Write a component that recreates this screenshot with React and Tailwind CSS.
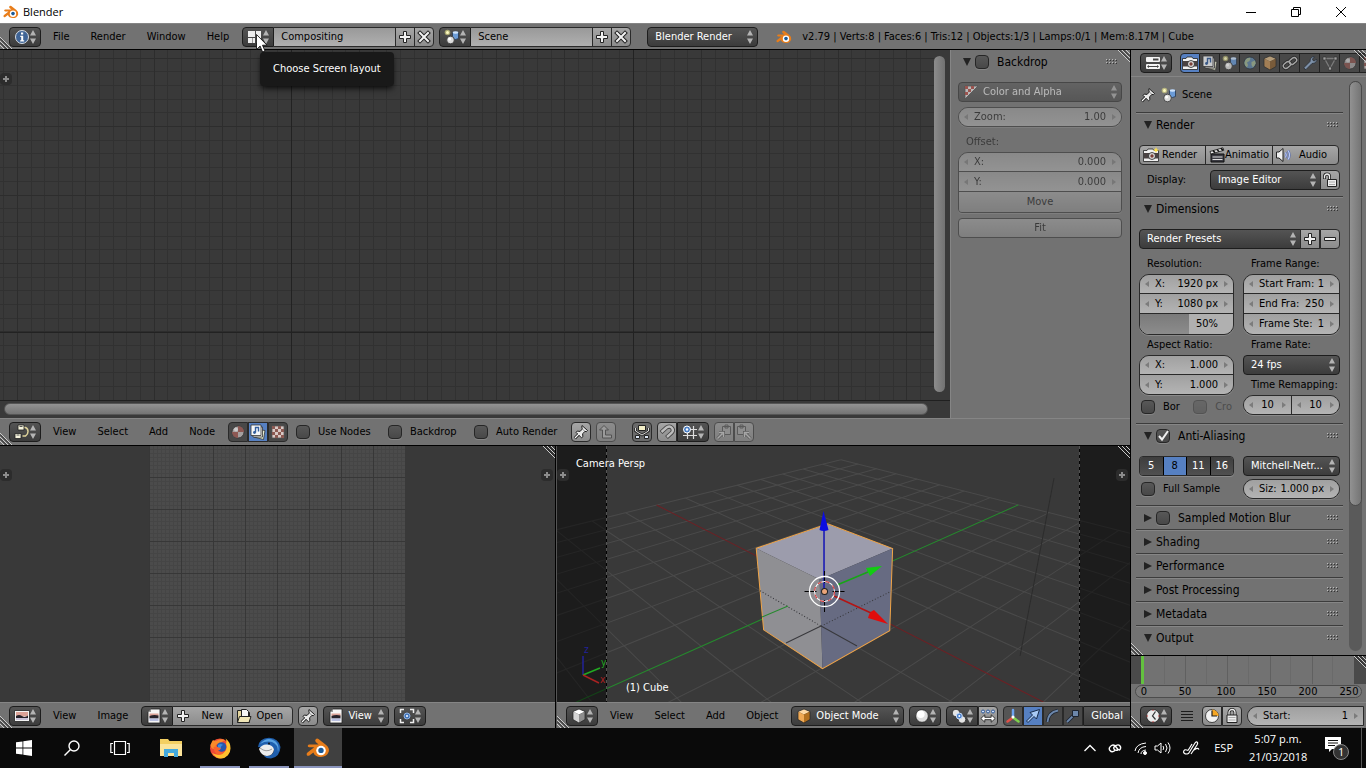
import React, { useState } from 'react'
import clsx from 'clsx'

/* ---------- icons ---------- */

function Ico({ children, className = 'size-4' }) {
  return <svg viewBox="0 0 16 16" className={clsx('shrink-0', className)} fill="none" aria-hidden="true">{children}</svg>
}

const BlenderLogo = ({ className }) => (
  <Ico className={className}>
    <path d="M6.6 2 Q7.4 1.300 8.300 2 L13.400 6 Q15.800 8 15.200 10.400 Q14 14 9.900 14 Q5.900 13.900 4.900 11 L2.300 13 Q1 13.600.5 12.600 Q.2 11.700 1 11 L5.500 7.500 H2.200 Q.9 7.300 1.200 6.300 Q1.400 5.600 2.300 5.600 H8.400 L6.500 4 Q5.700 3 6.600 2Z" fill="#e87d1a" />
    <circle cx="10" cy="9.700" r="3.200" fill="#fff" />
    <circle cx="10" cy="9.600" r="1.800" fill="#1c5a96" />
  </Ico>
)
const InfoIcon = () => (
  <Ico>
    <circle cx="8" cy="8" r="6.500" fill="#3f6496" stroke="#d7dde5" />
    <path d="M7 3.500h2.200v2H7zM6.300 6.800h2.900v4.400h1v1.200H6.200v-1.200h1V8h-.9z" fill="#fff" />
  </Ico>
)
const LayoutIcon = () => (
  <Ico><path d="M1 2h7v6H1zM1 9h4.500v5H1zM9 2h5v12H9zM6 9h2v5H6z" fill="#eee" /></Ico>
)
const PlusIcon = () => (
  <Ico><path d="M6.500 2.500h3v4h4v3h-4v4h-3v-4h-4v-3h4z" fill="#f2f2f2" stroke="#222" /></Ico>
)
const MinusIcon = () => <Ico><path d="M2.500 6.500h11v3h-11z" fill="#f2f2f2" stroke="#222" /></Ico>
const CrossIcon = () => (
  <Ico>
    <path d="M4 4l8 8M12 4l-8 8" stroke="#222" strokeWidth="4" strokeLinecap="square" />
    <path d="M4 4l8 8M12 4l-8 8" stroke="#f2f2f2" strokeWidth="2" strokeLinecap="square" />
  </Ico>
)
const SceneIcon = () => (
  <Ico>
    <circle cx="3.500" cy="3.500" r="2.800" fill="#e6e38a" opacity=".6" />
    <circle cx="3.500" cy="3.500" r="1.500" fill="#fdfbc0" />
    <path d="M8.500 3.500q3-2 6 0v6q-3 2-6 0z" fill="#6b9bd6" stroke="#26364e" strokeWidth=".8" />
    <ellipse cx="11.500" cy="3.500" rx="2.800" ry="1.200" fill="#cfe3fa" />
    <circle cx="6.500" cy="11" r="3.800" fill="#ddd" stroke="#333" strokeWidth=".8" />
    <circle cx="5.600" cy="10" r="1.500" fill="#fff" />
  </Ico>
)
const NodeIcon = () => (
  <Ico>
    <path d="M9.500 3.500h2q2.500 1 2.500 4t-2.500 4.500h-3" stroke="#ddd29a" strokeWidth="1.500" />
    <path d="M4 1h6v5H4zM1 9.500h6v5H1z" fill="#f6f4dd" stroke="#222" strokeWidth=".8" />
    <path d="M5.500 2.500h3M2.500 11h3" stroke="#555" />
  </Ico>
)
const MaterialIcon = () => (
  <Ico>
    <circle cx="8" cy="8" r="6" fill="#a5a0a0" stroke="#333" strokeWidth=".8" />
    <path d="M8 2a6 6 0 0 1 6 6H8zM8 8v6a6 6 0 0 1-6-6z" fill="#8d5853" />
    <circle cx="6" cy="5.500" r="2" fill="#ddd" opacity=".7" />
  </Ico>
)
const LayersIcon = () => (
  <Ico>
    <path d="M5 5l10 1.500-1.500 9L4 13z" fill="#e8ecd2" stroke="#333" strokeWidth=".8" />
    <path d="M3 3h9.500v10H3z" fill="#eee" stroke="#333" strokeWidth=".8" />
    <path d="M1 1h10v10.500H1z" fill="#f6f8fb" stroke="#333" strokeWidth=".8" />
    <path d="M5.500 8.500V3.500h3v4" stroke="#345e9d" strokeWidth="1.400" />
    <circle cx="4.500" cy="8.500" r="1.400" fill="#345e9d" />
  </Ico>
)
const CheckerIcon = () => (
  <Ico>
    <path d="M2 2h12v12H2z" fill="#d9c9c5" stroke="#555" strokeWidth=".8" />
    <path d="M2 2h3v3H2zM8 2h3v3H8zM5 5h3v3H5zM11 5h3v3h-3zM2 8h3v3H2zM8 8h3v3H8zM5 11h3v3H5zM11 11h3v3h-3z" fill="#8c5a53" />
  </Ico>
)
const AlphaIcon = () => (
  <Ico>
    <path d="M2 2h13L2 15z" fill="#fff" stroke="#333" strokeWidth=".8" />
    <path d="M2 2h3v3H2zM8 2h3v3H8zM5 5h3v3H5zM2 8h3v3H2z" fill="#c2372c" />
  </Ico>
)
const PinIcon = () => (
  <Ico>
    <path d="M5.800 10.200L1.800 14.200" stroke="#1d1d1d" strokeWidth="3" />
    <path d="M9 1.500l5.500 5-1.200 1.200-1.300-.3-2.400 2.300.3 3-1.300 1.200L3 8.300l1.200-1.200 2.900.3L9.300 5 8.800 3z" fill="#e9e9e9" stroke="#1d1d1d" />
    <path d="M5.800 10.200L2 14" stroke="#fff" strokeWidth="1.200" />
    <path d="M9.300 5L12 7.400" stroke="#777" strokeWidth=".8" />
  </Ico>
)
const ParentIcon = () => (
  <Ico><path d="M6 1.500l4.500 4.500h-3v5h6v3h-9V6h-3z" fill="#c4c4c4" stroke="#333" /></Ico>
)
const AutoOffsetIcon = () => (
  <Ico>
    <path d="M4.500 1.500h7v5h-7z" fill="#f3efc8" stroke="#222" />
    <path d="M1.500 4v3l6.500 4 6.500-4V4" stroke="#222" strokeWidth="2.500" />
    <path d="M1.500 4v3l6.500 4 6.500-4V4" stroke="#ddd" />
    <path d="M1.500 11.500h4v3h-4zM10.500 11.500h4v3h-4z" fill="#dbe5f4" stroke="#222" />
  </Ico>
)
const MagnetIcon = () => (
  <Ico>
    <path d="M2 8.500L7.500 3.500q3.500-2 5.500.5t-.5 5L7.500 13.500" stroke="#444" strokeWidth="4.200" />
    <path d="M2.500 8L7.500 3.500q3.500-2 5.500.5t-.5 5L8 13" stroke="#bdbdbd" strokeWidth="2.400" />
  </Ico>
)
const SnapIcon = () => (
  <Ico>
    <path d="M1 5.500h14M1 11.500h14M5.500 2v13M11.500 2v13" stroke="#ddd" strokeWidth="1.200" />
    <circle cx="5" cy="5.500" r="3.500" fill="#4b7fc4" stroke="#fff" />
    <circle cx="5" cy="5.500" r="1.200" fill="#fff" />
  </Ico>
)
const CopyIcon = ({ flip }) => (
  <Ico className={flip ? 'size-4 -scale-x-100' : 'size-4'}>
    <path d="M6.500 2.500h8v8h-8zM9 1h3v3H9z" fill="#aaa" stroke="#444" />
    <path d="M1.500 14.500l5-5M3 8.500h4.500V13" stroke="#444" strokeWidth="3" />
    <path d="M1.500 14.500l5-5M3 8.500h4.500V13" stroke="#ddd" strokeWidth="1.500" />
  </Ico>
)
const PictureIcon = () => (
  <Ico>
    <path d="M.5 2.500h15v11H.5z" fill="#f3f3f3" stroke="#222" strokeWidth=".8" />
    <path d="M2 4h12v4.500H2z" fill="#dba297" />
    <path d="M2 8q3-2 6 0t6-.5v3H2z" fill="#26222a" />
    <path d="M2 10h12v2H2z" fill="#c9c3d8" />
  </Ico>
)
const ImageFileIcon = () => (
  <Ico>
    <path d="M5 1h9v14H2V4z" fill="#f5f5f5" stroke="#222" strokeWidth=".8" />
    <path d="M3.500 5.500h9v3h-9z" fill="#dba297" />
    <path d="M3.500 8q4-1.500 9-.5v3h-9z" fill="#26222a" />
    <path d="M3.500 10.500h9V13h-9z" fill="#b9bfe0" />
    <path d="M2 4h3V1z" fill="#999" />
  </Ico>
)
const FolderIcon = () => (
  <Ico>
    <path d="M1.500 2.500h4v2h8v10h-12z" fill="#e2d49c" stroke="#222" />
    <path d="M5.500 1.500h5l2 2v6h-7z" fill="#f6f6f6" stroke="#222" />
    <path d="M3.500 8.500h11.500l-2 6H1.500z" fill="#f0e6b6" stroke="#222" />
  </Ico>
)
const PivotFrameIcon = () => (
  <Ico>
    <path d="M1.500 5V1.500H5M11 1.500h3.500V5M14.500 11v3.500H11M5 14.500H1.500V11" stroke="#eee" strokeWidth="1.500" />
    <circle cx="8" cy="8" r="3" fill="#4576b9" stroke="#8fb2e2" />
    <circle cx="8" cy="8" r="1" fill="#fff" />
  </Ico>
)
const CubeIcon = ({ colors = ['#fff', '#d5d5d5', '#8e8e8e'] }) => (
  <Ico>
    <path d="M8 1l6 2.500L8 6.500 2 3.500z" fill={colors[0]} />
    <path d="M2 3.500l6 3V15l-6-3.500z" fill={colors[1]} />
    <path d="M14 3.500l-6 3V15l6-3.500z" fill={colors[2]} />
    <path d="M8 1l6 2.500v8L8 15l-6-3.500v-8z" stroke="#222" strokeWidth=".7" />
  </Ico>
)
const orange = ['#ffd9a4', '#f0a954', '#b3701f']
const SolidIcon = () => (
  <Ico>
    <circle cx="8" cy="8" r="6.300" fill="#dedede" stroke="#222" strokeWidth=".8" />
    <circle cx="6.800" cy="6.300" r="3.800" fill="#fff" />
  </Ico>
)
const MedianIcon = () => (
  <Ico>
    <circle cx="5" cy="5" r="3.800" fill="#e4e4e4" stroke="#222" strokeWidth=".8" />
    <circle cx="11" cy="11.500" r="3.800" fill="#e4e4e4" stroke="#222" strokeWidth=".8" />
    <circle cx="8.300" cy="8" r="3" fill="#4b80cc" stroke="#cfe0fa" />
    <circle cx="8.300" cy="8" r="1" fill="#fff" />
  </Ico>
)
const CentersIcon = () => (
  <Ico>
    <g stroke="#2e5795" fill="#cfe0fa"><circle cx="3" cy="3.500" r="1.500" /><circle cx="8" cy="3.500" r="1.500" /><circle cx="13" cy="3.500" r="1.500" /></g>
    <path d="M.8 10.500l4-3.700v2.500h6.400V6.800l4 3.700-4 3.700v-2.500H4.800v2.500z" fill="#fff" stroke="#222" strokeWidth=".9" />
  </Ico>
)
const AxesIcon = () => (
  <Ico>
    <path d="M8 9V2" stroke="#6da4f0" strokeWidth="2.500" strokeLinecap="round" />
    <path d="M8 9.500l-5.500 4" stroke="#e05048" strokeWidth="2.500" strokeLinecap="round" />
    <path d="M8 9.500l5.500 4" stroke="#7ed04c" strokeWidth="2.500" strokeLinecap="round" />
    <circle cx="8" cy="9" r="1.500" fill="#fff" />
  </Ico>
)
const ArrowIcon = () => (
  <Ico><path d="M1.500 13L7.500 7 5 4.500 14.500 1.500 11.500 11 9 8.500 3 14.500z" fill="#a8c9f5" stroke="#15294a" /></Ico>
)
const ArcIcon = () => (
  <Ico>
    <path d="M2.500 14Q3 4.500 13 2.500" stroke="#1d2430" strokeWidth="3.500" />
    <path d="M2.500 14Q3 4.500 13 2.500" stroke="#6c87ab" strokeWidth="1.800" />
  </Ico>
)
const ScaleIcon = () => (
  <Ico>
    <path d="M2 14l7-7" stroke="#1d2430" strokeWidth="3.500" /><path d="M2 14l7-7" stroke="#6c87ab" strokeWidth="1.800" />
    <path d="M7.500 2.500h6v6h-6z" fill="#6c87ab" stroke="#1d2430" />
  </Ico>
)
const ClockIcon = () => (
  <Ico>
    <circle cx="8" cy="8" r="6.500" fill="#ececec" stroke="#222" strokeWidth=".8" />
    <path d="M10.500 3.500L7.500 8l3 3.500" stroke="#333" strokeWidth="1.200" />
    <path d="M8 1.500v1.500M8 13v1.500M1.500 8H3M13 8h1.500" stroke="#b33" />
  </Ico>
)
const RangeClockIcon = () => (
  <Ico>
    <circle cx="8" cy="8" r="6.500" fill="#f1f1f1" stroke="#222" strokeWidth=".8" />
    <path d="M8 8V1.500A6.500 6.500 0 0 1 14.500 8z" fill="#f5a623" />
    <path d="M8 2.500V8h5" stroke="#222" strokeWidth="1.200" />
  </Ico>
)
const LockIcon = () => (
  <Ico>
    <path d="M5 7V4.500a3 3 0 0 1 6 0V7" stroke="#222" strokeWidth="3" /><path d="M5 7V4.500a3 3 0 0 1 6 0V7" stroke="#eee" strokeWidth="1.300" />
    <path d="M3 7h10v7.500H3z" fill="#eee" stroke="#222" /><path d="M4.500 9.500h7M4.500 12h7" stroke="#aaa" />
  </Ico>
)
const UnlockIcon = () => (
  <Ico>
    <path d="M2.500 7V4.500a2.500 2.500 0 0 1 5 0V8" stroke="#222" strokeWidth="3" /><path d="M2.500 6.500v-2a2.500 2.500 0 0 1 5 0V8" stroke="#eee" strokeWidth="1.300" />
    <path d="M5.500 7.500h9v7h-9z" fill="#eee" stroke="#222" /><path d="M7 10h6M7 12.500h6" stroke="#aaa" />
  </Ico>
)
const PropsIcon = () => (
  <Ico>
    <rect x="1" y="2" width="14" height="5" rx="1" fill="#f4f4f4" /><path d="M8 3.500h5.500v2H8z" fill="#444" />
    <rect x="1" y="9" width="14" height="5" rx="1" fill="#f4f4f4" /><path d="M4 11.500h8" stroke="#444" /><path d="M4 10l-2 1.500L4 13zM12 10l2 1.500-2 1.500z" fill="#444" />
  </Ico>
)
const CameraIcon = ({ star }) => (
  <Ico>
    <path d="M.5 3.500h3.500l1-1.500h5l1 1.500h4.500v11H.5z" fill="#f1f1f1" stroke="#222" strokeWidth=".8" />
    <path d="M1 6h14v5.500H1z" fill="#4a4242" />
    <circle cx="9" cy="9" r="3.500" fill="#ddd" stroke="#222" strokeWidth=".8" />
    <circle cx="9" cy="9" r="1.700" fill="#7a4038" />
    {star && <path d="M13 0l.9 2.200L16 3l-2.100.9L13 6l-.9-2.100L10 3l2.100-.8z" fill="#ffe14a" />}
  </Ico>
)
const WorldIcon = () => (
  <Ico>
    <circle cx="8" cy="8" r="6" fill="#6286a8" stroke="#26303a" strokeWidth=".8" />
    <path d="M4 4q3-2 4.500-1L7.500 6 5 7.500 6 10l-1 2.500Q2 10 2.500 7zM9.500 7l3.500-1.500.8 3L11 12.500 9.500 10z" fill="#9fb493" />
  </Ico>
)
const LinkIcon = () => (
  <Ico>
    <g stroke="#222" strokeWidth="3.200"><rect x="1" y="7.500" width="8" height="5" rx="2.500" transform="rotate(-40 5 10)" /><rect x="7" y="3.500" width="8" height="5" rx="2.500" transform="rotate(-40 11 6)" /></g>
    <g stroke="#c4c4c4" strokeWidth="1.400"><rect x="1" y="7.500" width="8" height="5" rx="2.500" transform="rotate(-40 5 10)" /><rect x="7" y="3.500" width="8" height="5" rx="2.500" transform="rotate(-40 11 6)" /></g>
  </Ico>
)
const WrenchIcon = () => (
  <Ico><path d="M2 12.500l6-6Q7.500 3 11 1.500l1.500.3-2 2.200.5 1.500 1.500.5 2-2 .3 1.500Q13.500 9 10 8.500l-6 6Q2.500 15 2 12.500z" fill="#8fa9c8" stroke="#1d2430" strokeWidth=".8" /></Ico>
)
const MeshIcon = () => (
  <Ico>
    <path d="M2.500 3.500h11L8 13.500z" stroke="#8d8d8d" strokeWidth="1.300" />
    <path d="M1 2h3v3H1zM12 2h3v3h-3zM6.500 12h3v3h-3z" fill="#bdbdbd" stroke="#222" strokeWidth=".6" />
  </Ico>
)
const ClapperIcon = () => (
  <Ico>
    <path d="M2 7h13v8H2z" fill="#3b3b42" stroke="#111" />
    <path d="M1 4.500L14 .8l.8 2.500L1.800 7z" fill="#eee" stroke="#111" strokeWidth=".8" />
    <path d="M4 3.600l2 2M8 2.500l2 2M12 1.400l2 2" stroke="#111" strokeWidth="1.500" />
    <path d="M3.500 10h10M3.500 12.500h10" stroke="#ddd" />
  </Ico>
)
const SpeakerIcon = () => (
  <Ico>
    <path d="M.5 5h2.500l4-3.500v13L3 11H.5z" fill="#eee" stroke="#222" />
    <path d="M9.500 5.500q1.500 2.500 0 5M12 3.500q3 4.500 0 9" stroke="#5c6fb0" strokeWidth="2.400" />
    <path d="M9.500 5.500q1.500 2.500 0 5M12 3.500q3 4.500 0 9" stroke="#bccbf2" strokeWidth="1.200" />
  </Ico>
)

/* ---------- small parts ---------- */

const UpDown = () => (
  <svg viewBox="0 0 6 14" className="h-3.5 w-1.5 shrink-0" aria-hidden="true"><path d="M3 0l3 5.500H0zM3 14l3-5.500H0z" fill="#b4b4b4" /></svg>
)
const Tri = ({ left }) => (
  <svg viewBox="0 0 4 6" className="h-1.5 w-1 shrink-0" aria-hidden="true"><path d={left ? 'M4 0v6L0 3z' : 'M0 0v6l4-3z'} fill="#7c7c7c" /></svg>
)
const Dots = () => (
  <svg viewBox="0 0 12 6" className="h-1.5 w-3 shrink-0" aria-hidden="true">
    {[0, 3, 6, 9].map(x => [0, 3].map(y => (
      <g key={x + '-' + y}><rect x={x + 1} y={y + 1} width="1" height="1" fill="#333" /><rect x={x} y={y} width="1" height="1" fill="#bbb" /></g>
    )))}
  </svg>
)
const Corner = ({ className }) => (
  <svg viewBox="0 0 12 12" className={clsx('pointer-events-none absolute size-3', className)} aria-hidden="true">
    <path d="M0 0l12 12M0 4l8 8M0 8l4 4" stroke="#ccc" /><path d="M0 1.500l10.500 10.500M0 5.500L6.500 12" stroke="#222" />
  </svg>
)

const dark = 'border border-[#1d1d1d] bg-linear-to-b from-[#545454] to-[#3c3c3c] text-white'
const light = 'bg-linear-to-b from-[#a6a6a6] to-[#8c8c8c]'
const frame = 'overflow-hidden border border-[#2a2a2a] shadow-[0_1px_0_#8a8a8a]'

function EditorButton({ label, children, className = 'rounded' }) {
  return (
    <button aria-label={label} aria-haspopup="menu" className={clsx('flex h-5 w-8 shrink-0 items-center justify-between pr-1 pl-1', dark, className)}>
      {children}<UpDown />
    </button>
  )
}

function Dropdown({ label, value, icon, className }) {
  return (
    <label className={clsx('flex h-5 shrink-0 items-center gap-1 pr-1', dark, icon ? 'pl-1' : 'pl-[7px]', className || 'rounded')}>
      {icon}
      <select aria-label={label} className="w-full min-w-0 flex-1 appearance-none text-ellipsis outline-none"><option>{value}</option></select>
      <UpDown />
    </label>
  )
}

function Check({ id, on, disabled }) {
  const [checked, setChecked] = useState(!!on)
  return (
    <span className={clsx('relative flex size-3.5 shrink-0', disabled && 'opacity-40')}>
      <input id={id} type="checkbox" checked={checked} disabled={disabled} onChange={e => setChecked(e.target.checked)}
        className="size-3.5 appearance-none rounded border border-[#262626] bg-linear-to-b from-[#585858] to-[#484848] shadow-[0_1px_0_#858585]" />
      {checked && <svg viewBox="0 0 14 14" className="pointer-events-none absolute inset-0" fill="none"><path d="M3 7l3 3.500L12 2" stroke="#f0f0f0" strokeWidth="2" /></svg>}
    </span>
  )
}

function CheckLabel({ id, children, on, disabled, className }) {
  return (
    <span className={clsx('flex items-center gap-2', className)}>
      <Check id={id} on={on} disabled={disabled} />
      <label htmlFor={id} className={clsx('whitespace-nowrap', disabled && 'text-[#4c4c4c]')}>{children}</label>
    </span>
  )
}

function Num({ label, name, value, disabled, className }) {
  return (
    <label className={clsx('flex min-w-0 items-center bg-linear-to-b from-[#a0a0a0] to-[#b4b4b4] px-[5px]', className || 'h-5')}>
      <Tri left />
      {label && <span className="ml-1.5 shrink-0 whitespace-nowrap">{label}</span>}
      <input aria-label={name} defaultValue={value} disabled={disabled}
        className={clsx('w-full min-w-0 flex-1 bg-transparent outline-none', label ? 'mr-1.5 text-right' : 'text-center')} />
      <Tri />
    </label>
  )
}

function Stack({ children, className }) {
  return <div className={clsx('divide-y divide-[#2a2a2a]', frame, className || 'rounded-[10px]')}>{children}</div>
}

function Menus({ items }) {
  return (
    <nav className="flex gap-px pr-[3px] pl-0.5">
      {items.map(m => <button key={m} className="px-2.5">{m}</button>)}
    </nav>
  )
}

function Header({ children, className = 'h-[26px]' }) {
  return (
    <div className={clsx('relative flex shrink-0 items-center overflow-hidden border-t border-[#858585] bg-[#727272] pl-[9px]', className)}>
      {children}
      <Corner className="bottom-0 left-0" />
    </div>
  )
}

function IconButton({ label, children, className = 'rounded', tone = light }) {
  return <button aria-label={label} className={clsx('flex h-5 w-5 shrink-0 items-center justify-center border border-[#2a2a2a]', tone, className)}>{children}</button>
}

const Knob = ({ className }) => (
  <button aria-label="Show region" className={clsx('absolute flex size-3 items-center justify-center rounded bg-[#2c2c2c]', className)}>
    <svg viewBox="0 0 6 6" className="size-1.5"><path d="M2 0h2v2h2v2H4v2H2V4H0V2h2z" fill="#8c8c8c" /></svg>
  </button>
)

/* ---------- info header ---------- */

function DataBlock({ icon, label, value }) {
  return (
    <div className="flex h-5 shrink-0">
      {icon}
      <input aria-label={label} defaultValue={value} className="w-[121px] border-y border-[#2a2a2a] bg-linear-to-b from-[#999] to-[#b0b0b0] px-[7px] outline-none" />
      <IconButton label={'Add ' + label} className="rounded-none"><PlusIcon /></IconButton>
      <IconButton label={'Delete ' + label} className="-ml-px rounded-r"><CrossIcon /></IconButton>
    </div>
  )
}

function InfoHeader() {
  return (
    <Header className="h-[27px] border-b border-b-black">
      <EditorButton label="Info editor"><InfoIcon /></EditorButton>
      <Menus items={['File', 'Render', 'Window', 'Help']} />
      <div className="flex gap-[5px]">
        <DataBlock label="screen" value="Compositing" icon={<EditorButton label="Choose Screen layout" className="rounded-l"><LayoutIcon /></EditorButton>} />
        <DataBlock label="scene" value="Scene" icon={<EditorButton label="Choose scene" className="rounded-l"><SceneIcon /></EditorButton>} />
      </div>
      <Dropdown label="Engine" value="Blender Render" className="ml-4 w-[111px] rounded" />
      <span className="ml-[18px]"><BlenderLogo className="size-4" /></span>
      <span className="ml-2.5 whitespace-nowrap">v2.79 | Verts:8 | Faces:6 | Tris:12 | Objects:1/3 | Lamps:0/1 | Mem:8.17M | Cube</span>
    </Header>
  )
}

/* ---------- node editor ---------- */

function Lines({ step, from, fromY, count, color }) {
  const at = Array.from({ length: count }, (_, i) => i)
  return (
    <g stroke={color} shapeRendering="crispEdges">
      {at.map(i => <line key={'v' + i} x1={from + i * step} x2={from + i * step} y1="0" y2="100%" />)}
      {at.map(i => <line key={'h' + i} y1={fromY + i * step} y2={fromY + i * step} x1="0" x2="100%" />)}
    </g>
  )
}

function BackdropPanel() {
  return (
    <aside className="relative w-[180px] shrink-0 border-l border-[#858585] bg-[#727272] pr-2 pl-[7px]">
      <Corner className="top-0 right-0 rotate-180" />
      <div className="flex h-6 items-center pr-1 text-xs">
        <svg viewBox="0 0 8 8" className="mr-1 ml-[5px] size-2"><path d="M0 0h8L4 8z" fill="#222" /></svg>
        <CheckLabel id="backdrop-panel" className="gap-1.5">Backdrop</CheckLabel>
        <span className="ml-auto"><Dots /></span>
      </div>
      <div className="mt-2 opacity-50">
        <Dropdown label="Channels" value="Color and Alpha" icon={<AlphaIcon />} />
        <div className={clsx('mt-[5px] rounded-full', frame)}><Num label="Zoom:" value="1.00" disabled className="h-[18px]" /></div>
        <div className="mt-[5px] flex h-5 items-center px-2">Offset:</div>
        <Stack className="rounded-t-[10px] rounded-b">
          <Num label="X:" value="0.000" disabled className="h-[19px]" />
          <Num label="Y:" value="0.000" disabled className="h-5" />
          <button disabled className={clsx('h-5 w-full', light)}>Move</button>
        </Stack>
        <button disabled className={clsx('mt-[5px] h-5 w-full rounded border border-[#2a2a2a]', light)}>Fit</button>
      </div>
    </aside>
  )
}

function NodeEditor() {
  return (
    <section className="flex min-h-0 flex-1 flex-col border-b border-black">
      <div className="flex min-h-0 flex-1">
        <div className="relative flex min-w-0 flex-1 flex-col bg-[#393939]">
          <div className="flex min-h-0 flex-1">
            <div className="min-w-0 flex-1 overflow-hidden">
              <svg className="h-full w-full">
                <Lines step={13.68} from={3.8} fromY={8.2} count={140} color="#313131" />
                <Lines step={68.4} from={17.5} fromY={8.2} count={30} color="#2d2d2d" />
                <Lines step={342} from={291} fromY={282} count={6} color="#222" />
              </svg>
            </div>
            <div className="w-4 shrink-0 pt-1.5 pr-[5px] pb-2"><div className="h-full rounded-full bg-linear-to-r from-[#8c8c8c] to-[#727272]" /></div>
          </div>
          <div className="h-[18px] border-t border-[#202020] pt-0.5 pr-[22px] pl-1"><div className="h-3 rounded-full border border-[#555] bg-linear-to-b from-[#939393] to-[#747474]" /></div>
          <Knob className="top-[23px] left-0" />
        </div>
        <BackdropPanel />
      </div>
      <Header className="h-[27px]">
        <EditorButton label="Node editor"><NodeIcon /></EditorButton>
        <Menus items={['View', 'Select', 'Add', 'Node']} />
        <div className="flex">
          <IconButton label="Shader nodes" tone="bg-[#484848]" className="rounded-l"><MaterialIcon /></IconButton>
          <IconButton label="Compositing nodes" tone="bg-[#5680c2]" className="rounded-none"><LayersIcon /></IconButton>
          <IconButton label="Texture nodes" tone="bg-[#484848]" className="rounded-r"><CheckerIcon /></IconButton>
        </div>
        <CheckLabel id="use-nodes" className="ml-2 w-[92px]">Use Nodes</CheckLabel>
        <CheckLabel id="backdrop" className="w-[86px]">Backdrop</CheckLabel>
        <CheckLabel id="auto-render" className="w-[97px]">Auto Render</CheckLabel>
        <div className="flex gap-[5px]">
          <IconButton label="Pin"><PinIcon /></IconButton>
          <IconButton label="Go to parent" className="rounded opacity-50"><ParentIcon /></IconButton>
        </div>
        <div className="ml-4 flex gap-[5px]">
          <IconButton label="Auto offset" tone="bg-[#6a6a6a]"><AutoOffsetIcon /></IconButton>
          <div className="flex">
            <IconButton label="Snap" className="rounded-l"><MagnetIcon /></IconButton>
            <EditorButton label="Snap element" className="rounded-r"><SnapIcon /></EditorButton>
          </div>
          <div className="flex opacity-50">
            <IconButton label="Copy" className="rounded-l"><CopyIcon /></IconButton>
            <IconButton label="Paste" className="rounded-r"><CopyIcon flip /></IconButton>
          </div>
        </div>
      </Header>
    </section>
  )
}

/* ---------- image editor ---------- */

function ImageEditor() {
  return (
    <section className="flex w-[49.2%] flex-col border-r border-black">
      <div className="relative min-h-0 flex-1 bg-[#393939]">
        <div className="mx-auto h-full w-64 overflow-hidden bg-[#4b4b4b]">
          <svg className="h-full w-full">
            <Lines step={4} from={0.5} fromY={3.5} count={65} color="#454545" />
            <Lines step={32} from={0.5} fromY={31.5} count={9} color="#373737" />
          </svg>
        </div>
        <Knob className="top-[23px] left-0" />
        <Knob className="top-[23px] right-0.5" />
        <Corner className="top-0 right-0 rotate-180" />
      </div>
      <Header>
        <EditorButton label="Image editor"><PictureIcon /></EditorButton>
        <Menus items={['View', 'Image']} />
        <div className="flex">
          <EditorButton label="Browse image" className="rounded-l"><ImageFileIcon /></EditorButton>
          <button className={clsx('flex h-5 w-[59px] items-center gap-2.5 border-y border-[#2a2a2a] pl-0.5', light)}><PlusIcon />New</button>
          <button className={clsx('flex h-5 w-[61px] items-center gap-1 rounded-r border border-[#2a2a2a] pl-[3px]', light)}><FolderIcon />Open</button>
        </div>
        <IconButton label="Pin image" className="ml-[5px] rounded"><PinIcon /></IconButton>
        <Dropdown label="Mode" value="View" icon={<ImageFileIcon />} className="ml-[5px] w-[66px] rounded" />
        <span className="ml-[5px]"><EditorButton label="Pivot"><PivotFrameIcon /></EditorButton></span>
      </Header>
    </section>
  )
}

/* ---------- 3d view ---------- */

const rad = d => (d * Math.PI) / 180
const CAM = { x: 7.481, y: -6.508, z: 5.344, rx: rad(63.56), ry: rad(0.62), rz: rad(46.69), f: 522 }

// world point -> view point, as seen by the scene camera
function project(px, py, pz = 0) {
  const x = px - CAM.x, y = py - CAM.y, z = pz - CAM.z
  const x1 = Math.cos(CAM.rz) * x + Math.sin(CAM.rz) * y
  const y1 = -Math.sin(CAM.rz) * x + Math.cos(CAM.rz) * y
  const x2 = Math.cos(CAM.ry) * x1 - Math.sin(CAM.ry) * z
  const z2 = Math.sin(CAM.ry) * x1 + Math.cos(CAM.ry) * z
  const y3 = Math.cos(CAM.rx) * y1 + Math.sin(CAM.rx) * z2
  const z3 = -Math.sin(CAM.rx) * y1 + Math.cos(CAM.rx) * z2
  return [284 + (CAM.f * x2) / -z3, 127.5 - (CAM.f * y3) / -z3]
}

function Seg({ a, b, ...rest }) {
  const [x1, y1] = project(...a), [x2, y2] = project(...b)
  return <line x1={x1} y1={y1} x2={x2} y2={y2} {...rest} />
}
const pts = list => list.map(p => project(...p).map(n => n.toFixed(1)).join(',')).join(' ')

function Viewport() {
  const grid = Array.from({ length: 17 }, (_, i) => i - 8).filter(i => i !== 0)
  return (
    <svg viewBox="0 0 573 256" preserveAspectRatio="xMidYMid slice" className="h-full w-full bg-[#393939]">
      <g stroke="#4a4a4a" strokeWidth="1">
        {grid.map(i => <Seg key={'a' + i} a={[i, -8]} b={[i, 8]} />)}
        {grid.map(i => <Seg key={'b' + i} a={[-8, i]} b={[8, i]} />)}
      </g>
      <path d="M497 32L463 210" stroke="#2c2c2c" />
      <Seg a={[-8, 0]} b={[8, 0]} stroke="#6e2024" />
      <Seg a={[0, -8]} b={[0, 8]} stroke="#258a2d" />

      <rect width="49" height="256" fill="#000" opacity=".5" />
      <rect x="523" width="50" height="256" fill="#000" opacity=".5" />
      <path d="M49.500 0v256M522.500 0v256" stroke="#000" />
      <path d="M49.500 0v256M522.500 0v256" stroke="#555" strokeDasharray="3 3" />

      <polygon points={pts([[-1, -1, 1], [1, -1, 1], [1, 1, 1], [-1, 1, 1]])} fill="#9c9cac" />
      <polygon points={pts([[-1, -1, 1], [1, -1, 1], [1, -1, -1], [-1, -1, -1]])} fill="#8f8f93" />
      <polygon points={pts([[1, -1, 1], [1, 1, 1], [1, 1, -1], [1, -1, -1]])} fill="#676b82" />
      <polygon points={pts([[-1, -1, 1], [-1, 1, 1], [1, 1, 1], [1, 1, -1], [1, -1, -1], [-1, -1, -1]])} stroke="#f1a446" fill="none" />
      <g stroke="#38383c">
        <Seg a={[-1, -1]} b={[1, -1]} strokeDasharray="1 2" />
        <Seg a={[1, -1]} b={[1, 1]} strokeDasharray="1 2" />
        <path d="M264 180L229 197M264 180L300 200" />
      </g>
      <path d="M205 171L231 160" stroke="#258a2d" />

      <path d="M267 145V84" stroke="#1414b4" strokeWidth="1.500" />
      <path d="M266.500 65l5 19q-5 2-9 0z" fill="#0c0ce0" />
      <path d="M280 139l31-13" stroke="#17a517" strokeWidth="1.500" />
      <path d="M325 120l-16 2 4 8z" fill="#12cc12" />
      <path d="M277 150l37 17" stroke="#b41414" strokeWidth="1.500" />
      <path d="M331 178l-14-14q-5 2-6 8z" fill="#e00c0c" />
      <path d="M247.500 145.500h12M275.500 145.500h12M267.500 125v12M267.500 154v12" stroke="#000" />
      <circle cx="267.500" cy="145.500" r="15" fill="none" stroke="#fff" strokeWidth="1.300" />
      <circle cx="267.500" cy="145.500" r="10" fill="none" stroke="#fff" />
      <circle cx="267.500" cy="145.500" r="10" fill="none" stroke="#d33" strokeDasharray="4 4" />
      <circle cx="267.500" cy="145.500" r="3" fill="#eba57a" stroke="#222" />

      <g strokeWidth="1.500">
        <path d="M26 229V210" stroke="#22229a" /><path d="M26 229l17-7" stroke="#2a2" /><path d="M26 229l16 8" stroke="#a22" />
      </g>
      <g fontSize="10">
        <text x="27" y="207" fill="#22229a">z</text><text x="44" y="220" fill="#2a2">y</text><text x="43" y="237" fill="#a22">x</text>
      </g>
    </svg>
  )
}

function View3D() {
  return (
    <section className="flex min-w-0 flex-1 flex-col border-l border-[#555]">
      <div className="relative min-h-0 flex-1 text-white">
        <Viewport />
        <span className="absolute top-2.5 left-[19px]">Camera Persp</span>
        <span className="absolute bottom-1.5 left-[69px]">(1) Cube</span>
        <Knob className="top-[23px] left-0" />
        <Knob className="top-[23px] right-0.5" />
        <Corner className="top-0 right-0 rotate-180" />
      </div>
      <Header className="h-[26px]">
        <EditorButton label="3D view"><CubeIcon /></EditorButton>
        <Menus items={['View', 'Select', 'Add', 'Object']} />
        <Dropdown label="Mode" value="Object Mode" icon={<CubeIcon colors={orange} />} className="w-[113px] rounded" />
        <span className="ml-[5px]"><EditorButton label="Shading"><SolidIcon /></EditorButton></span>
        <div className="ml-[5px] flex">
          <EditorButton label="Pivot point" className="rounded-l"><MedianIcon /></EditorButton>
          <IconButton label="Manipulate centers" className="rounded-r"><CentersIcon /></IconButton>
        </div>
        <div className="ml-[5px] flex">
          <IconButton label="Manipulator" tone="bg-[#555]" className="rounded-l"><AxesIcon /></IconButton>
          <IconButton label="Translate" tone="bg-[#5680c2]" className="rounded-none"><ArrowIcon /></IconButton>
          <IconButton label="Rotate" tone="bg-[#484848]" className="rounded-none"><ArcIcon /></IconButton>
          <IconButton label="Scale" tone="bg-[#484848]" className="rounded-none"><ScaleIcon /></IconButton>
          <Dropdown label="Orientation" value="Global" className="w-[88px] rounded-r" />
        </div>
      </Header>
    </section>
  )
}

/* ---------- properties ---------- */

function Panel({ title, open, check, on, children }) {
  return (
    <section className="border-t border-[#3c3c3c]">
      <div className="flex h-[23px] items-center border-t border-[#868686] pr-1 pb-px pl-2 text-xs">
        <svg viewBox="0 0 8 8" className="mr-1 size-2 shrink-0"><path d={open ? 'M0 0h8L4 8z' : 'M0 0v8l8-4z'} fill="#222" /></svg>
        {check ? <CheckLabel id={check} on={on} className="gap-1.5">{title}</CheckLabel> : <h2>{title}</h2>}
        <span className="ml-auto"><Dots /></span>
      </div>
      {children && <div className="px-[3px] pt-[9px] pb-1.5">{children}</div>}
    </section>
  )
}

const tabs = [
  ['Render', <CameraIcon />], ['Render layers', <LayersIcon />], ['Scene', <SceneIcon />], ['World', <WorldIcon />],
  ['Object', <CubeIcon colors={['#d9b98a', '#c0915a', '#8a6236']} />], ['Constraints', <LinkIcon />], ['Modifiers', <WrenchIcon />],
  ['Data', <MeshIcon />], ['Material', <MaterialIcon />], ['Texture', <CheckerIcon />],
]

const ToolButton = ({ icon, children, className }) => (
  <button className={clsx('flex h-5 items-center overflow-hidden border border-[#2a2a2a] pl-[3px] whitespace-nowrap', light, className)}>{icon}{children}</button>
)
const FieldLabel = ({ children }) => <div className="flex h-5 items-center px-2 whitespace-nowrap">{children}</div>

function RenderPanels() {
  return (
    <>
      <Panel title="Render" open>
        <div className="flex pr-px">
          <ToolButton icon={<CameraIcon star />} className="w-[67px] gap-[3px] rounded-l">Render</ToolButton>
          <ToolButton icon={<ClapperIcon />} className="-ml-px w-[68px] rounded-none">Animatio</ToolButton>
          <ToolButton icon={<SpeakerIcon />} className="-ml-px flex-1 gap-[7px] rounded-r">Audio</ToolButton>
        </div>
        <div className="mt-[5px] flex items-center">
          <span className="w-[71px] pl-2">Display:</span>
          <Dropdown label="Display" value="Image Editor" className="flex-1 rounded-l" />
          <IconButton label="Lock interface" className="-ml-px rounded-r"><UnlockIcon /></IconButton>
        </div>
      </Panel>
      <Panel title="Dimensions" open>
        <div className="flex">
          <Dropdown label="Presets" value="Render Presets" className="flex-1 rounded-l" />
          <IconButton label="Add preset" className="-ml-px rounded-none"><PlusIcon /></IconButton>
          <IconButton label="Remove preset" className="rounded-r"><MinusIcon /></IconButton>
        </div>
        <div className="mt-[5px] grid grid-cols-[95px_minmax(0,1fr)] gap-x-[9px]">
          <div>
            <FieldLabel>Resolution:</FieldLabel>
            <Stack>
              <Num label="X:" value="1920 px" className="h-[19px]" />
              <Num label="Y:" value="1080 px" />
              <label className="relative flex h-5 items-center justify-end bg-[#b0b0b0] pr-[15px]">
                <span className="absolute inset-y-0 left-0 w-[53%] bg-linear-to-b from-[#7a7a7a] to-[#8c8c8c]" />
                <input type="range" aria-label="Resolution percentage" defaultValue="50" className="absolute inset-0 w-full opacity-0" />
                50%
              </label>
            </Stack>
            <FieldLabel>Aspect Ratio:</FieldLabel>
            <Stack>
              <Num label="X:" value="1.000" className="h-[19px]" />
              <Num label="Y:" value="1.000" className="h-[19px]" />
            </Stack>
            <div className="mt-0.5 flex h-5 items-center justify-between px-0.5">
              <CheckLabel id="border">Bor</CheckLabel>
              <CheckLabel id="crop" disabled>Cro</CheckLabel>
            </div>
          </div>
          <div>
            <FieldLabel>Frame Range:</FieldLabel>
            <Stack>
              <Num label="Start Fram:" value="1" className="h-[19px]" />
              <Num label="End Fra:" value="250" />
              <Num label="Frame Ste:" value="1" />
            </Stack>
            <FieldLabel>Frame Rate:</FieldLabel>
            <Dropdown label="Frame rate" value="24 fps" />
            <FieldLabel>Time Remapping:</FieldLabel>
            <div className={clsx('flex h-5 items-center divide-x divide-[#2a2a2a] rounded-full', frame)}>
              <Num name="Old" value="10" className="h-[18px] flex-1" />
              <Num name="New" value="10" className="h-[18px] flex-1" />
            </div>
          </div>
        </div>
      </Panel>
      <Panel title="Anti-Aliasing" open check="aa" on>
        <div className="grid grid-cols-[95px_minmax(0,1fr)] gap-x-[9px] gap-y-[3px]">
          <div className={clsx('flex h-5 divide-x divide-black rounded text-white', frame)}>
            {['5', '8', '11', '16'].map(n => (
              <button key={n} className={clsx('flex-1', n === '8' ? 'bg-[#5680c2] text-black' : 'bg-linear-to-b from-[#3e3e3e] to-[#505050]')}>{n}</button>
            ))}
          </div>
          <Dropdown label="Filter" value="Mitchell-Netr..." />
          <CheckLabel id="full" className="pl-0.5">Full Sample</CheckLabel>
          <div className={clsx('h-5 rounded-full', frame)}><Num label="Siz:" value="1.000 px" className="h-[18px]" /></div>
        </div>
      </Panel>
      <Panel title="Sampled Motion Blur" check="smb" />
      <Panel title="Shading" />
      <Panel title="Performance" />
      <Panel title="Post Processing" />
      <Panel title="Metadata" />
      <Panel title="Output" open />
    </>
  )
}

function Properties() {
  return (
    <section className="relative flex min-h-0 flex-1 flex-col overflow-hidden border-b border-black bg-[#727272]">
      <div className="flex h-[27px] shrink-0 items-center overflow-hidden border-b border-[#858585] pl-[9px]">
        <EditorButton label="Properties editor"><PropsIcon /></EditorButton>
        <div className="ml-2 flex" role="tablist">
          {tabs.map(([name, icon], i) => (
            <button key={name} role="tab" aria-label={name} aria-selected={i === 0}
              className={clsx('flex h-5 w-5 shrink-0 items-center justify-center border-y border-r border-[#222]', i === 0 ? 'rounded-l border-l bg-[#5680c2]' : 'bg-[#484848]')}>
              <span className={i === 0 ? '' : 'opacity-75'}>{icon}</span>
            </button>
          ))}
        </div>
      </div>
      <div className="flex min-h-0 flex-1">
        <div className="min-w-0 flex-1 overflow-hidden pl-[5px]">
          <div className="flex h-[35px] items-center gap-[5px] pl-1"><PinIcon /><SceneIcon /><span>Scene</span></div>
          <RenderPanels />
        </div>
        <div className="mt-1 mr-1 mb-1 ml-1.5 w-[13px] rounded-full bg-[#5a5a5a]">
          <div className="h-[74.5%] rounded-full border border-[#4a4a4a] bg-linear-to-r from-[#929292] to-[#757575]" />
        </div>
      </div>
      <Corner className="top-0 right-0 rotate-180" />
      <Corner className="bottom-0 left-0" />
    </section>
  )
}

function Timeline() {
  return (
    <section className="h-[72px] shrink-0 bg-[#727272]">
      <div className="relative flex h-7">
        <div className="w-2.5 bg-[#4a4a4a]" />
        <div className="w-[3px] bg-[#63c13f]" />
        <div className="flex flex-1 divide-x divide-[#606060]">
          {[0, 1, 2, 3, 4].map(i => <div key={i} className="flex-1"><div className="h-full w-1/2 border-r border-[#6a6a6a]" /></div>)}
        </div>
        <div className="w-3 bg-[#4a4a4a]" />
        <Corner className="top-0 right-0 rotate-180" />
      </div>
      <div className="mt-px mr-1 ml-1 flex h-[13px] items-center justify-between rounded-full border border-[#4c4c4c] bg-[#7c7c7c] pr-3 pl-2">
        {['0', '50', '100', '150', '200', '250'].map(t => <span key={t} className="flex w-0 justify-center">{t}</span>)}
      </div>
      <Header className="mt-1 h-[26px]">
        <EditorButton label="Timeline editor"><ClockIcon /></EditorButton>
        <button aria-label="Menus" className="mx-[7px] p-0.5">
          <svg viewBox="0 0 12 12" className="size-3"><path d="M0 1.500h12M0 4.500h12M0 7.500h12M0 10.500h12" stroke="#1d1d1d" /></svg>
        </button>
        <div className="flex">
          <IconButton label="Preview range" className="rounded-l"><RangeClockIcon /></IconButton>
          <IconButton label="Lock range" className="rounded-r"><LockIcon /></IconButton>
        </div>
        <div className={clsx('ml-[5px] h-5 w-[117px] shrink-0 rounded-l-full', frame)}><Num label="Start:" value="1" className="h-[18px]" /></div>
      </Header>
    </section>
  )
}

/* ---------- windows chrome ---------- */

function TitleBar() {
  return (
    <div className="flex h-[23px] shrink-0 items-center bg-white pl-[3px] font-['Open_Sans',sans-serif] text-[11px] text-black">
      <BlenderLogo className="size-4" />
      <h1 className="ml-1 flex-1">Blender</h1>
      <button aria-label="Minimize" className="flex w-[45px] justify-center"><svg viewBox="0 0 10 10" className="size-2.5"><path d="M0 5.500h10" stroke="#000" /></svg></button>
      <button aria-label="Restore" className="flex w-[45px] justify-center"><svg viewBox="0 0 10 10" className="size-2.5" fill="none" stroke="#000"><path d="M.5 2.500h7v7h-7zM2.500 2V.5h7v7H8" /></svg></button>
      <button aria-label="Close" className="mr-0.5 flex w-[46px] justify-center"><svg viewBox="0 0 10 10" className="size-2.5"><path d="M0 0l10 10M10 0L0 10" stroke="#000" /></svg></button>
    </div>
  )
}

function TaskButton({ label, open, active, children }) {
  return (
    <button aria-label={label} className={clsx('relative flex h-10 w-12 items-center justify-center', active ? 'bg-[#404040]' : '', open && 'mr-px')}>
      {children}
      {open && <span className={clsx('absolute bottom-0 h-0.5 bg-[#8b95bd]', active ? 'inset-x-0' : 'inset-x-1')} />}
    </button>
  )
}

function Taskbar() {
  return (
    <footer className="flex h-10 shrink-0 items-center bg-[#0a0a0a] font-['Open_Sans',sans-serif] text-[11px] leading-[18px] text-white">
      <TaskButton label="Start"><svg viewBox="0 0 16 16" className="size-4"><path d="M0 2.300L6.500 1.400v6.200H0zM7.300 1.300L16 0v7.600H7.300zM0 8.400h6.500v6.200L0 13.700zM7.300 8.400H16V16l-8.700-1.300z" fill="#fff" /></svg></TaskButton>
      <TaskButton label="Search"><svg viewBox="0 0 16 16" className="size-4" fill="none" stroke="#fff" strokeWidth="1.400"><circle cx="10" cy="6" r="5" /><path d="M6.500 9.500L.5 15.500" /></svg></TaskButton>
      <TaskButton label="Task view"><svg viewBox="0 0 20 16" className="h-4 w-5" fill="none" stroke="#fff" strokeWidth="1.200"><path d="M4.500 1.500h11v13h-11zM3 3.500H.8v9H3M17 3.500h2.200v9H17" /></svg></TaskButton>
      <span className="w-[3px]" />
      <TaskButton label="File Explorer">
        <svg viewBox="0 0 22 20" className="h-5 w-[22px]"><path d="M0 1h8l1.500 2H22v15H0z" fill="#f3cf62" /><path d="M0 6h22v12H0z" fill="#fbe49a" /><path d="M4 19v-8h14v8h-4v-4H8v4z" fill="#44a9dd" /></svg>
      </TaskButton>
      <span className="w-px" />
      <TaskButton label="Firefox" open>
        <svg viewBox="0 0 22 22" className="size-[22px]">
          <circle cx="11" cy="11.500" r="10" fill="#ee4a35" />
          <path d="M3 16q4 5.500 9 5.500A10 10 0 0 0 21.500 11q0-6-5-9.500 1.500 3 .5 5 2 6-2 9-5 4-12 .5z" fill="#ffc12e" />
          <path d="M1.500 8Q3 4 4 3q1 1 3 1 5-3 9-.5Q12 4 12.500 7q-5-1-6 2 2 0 3 1.500L5 12Q2 12 1.500 8z" fill="#fb8a2a" />
          <circle cx="12.500" cy="10" r="4.800" fill="#2757ae" />
          <path d="M9 8q3-2 5 0-2 .5-2 2 0 2-3 2.500z" fill="#3b8de0" />
          <path d="M4.500 10q3-1 5 .5l2.500.5q-1 2.500-3 2.500 3 3 6.500 1-2 4-6.500 3-4-1.500-4.500-7.500z" fill="#f9622d" />
        </svg>
      </TaskButton>
      <TaskButton label="Thunderbird" open>
        <svg viewBox="0 0 24 22" className="h-[22px] w-6">
          <path d="M1 10Q2 1 12 .8 22 1.500 23.500 10 23 20 14 21.500 9 21.500 7 19 17 20 17 12z" fill="#1f5fae" />
          <path d="M3 7Q10-1 18 4q5 4 3 11 0-8-6-10-6-1.500-12 2z" fill="#58a2e2" />
          <path d="M2 12Q5 7 10 7.500q6 .5 7 5-1 6-7 6.500-6-.5-8-7z" fill="#ececec" /><path d="M3 11q6 5 12 1" stroke="#999" fill="none" />
          <circle cx="12" cy="6.500" r="1" fill="#111" />
        </svg>
      </TaskButton>
      <TaskButton label="Blender" open active><BlenderLogo className="size-6" /></TaskButton>

      <div className="ml-auto flex items-center">
        <button aria-label="Show hidden icons" className="mr-3"><svg viewBox="0 0 12 8" className="h-2 w-3" fill="none"><path d="M.5 7L6 1.500 11.500 7" stroke="#fff" strokeWidth="1.300" /></svg></button>
        <svg viewBox="0 0 14 10" className="mr-3 h-2.5 w-3.5" fill="none" stroke="#fff" strokeWidth="1.400"><path d="M7 7.500Q4 10 2 7.500T3.500 2.500Q6 1 8 4t3.500 3Q13.500 5 12 3T8 2.500Q5 4 6 6t4 1" /></svg>
        <svg viewBox="0 0 14 14" className="mr-1.5 size-3.5" fill="none" stroke="#fff"><path d="M1 10Q2 3 12 2M4 12q1-6 8-6.500M7 13q0-3.500 5-4" /><circle cx="11" cy="12" r="1.500" fill="#fff" /></svg>
        <svg viewBox="0 0 18 14" className="mr-2.5 h-3.5 w-[18px]" fill="none" stroke="#fff"><path d="M1 5h2.500L7 2v10L3.500 9H1zM9 5q1.500 2 0 4M11.500 3q3 4 0 8M14 1.500q4 5.500 0 11" /></svg>
        <svg viewBox="0 0 18 16" className="mr-3.5 h-4 w-[18px]" fill="none" stroke="#fff" strokeWidth="1.200"><path d="M6 10.500Q2 8.500 1.500 12q1 3 5 1.500L13 3q1.500-2 2.500-.5.500 1-.5 2.500L9 14M10 4L6 10.500M12 10q3.500-3 5-.5" /></svg>
        <span>ESP</span>
        <div className="ml-4 w-[58px] text-center whitespace-nowrap">5:07 p.m.<br />21/03/2018</div>
        <button aria-label="Notifications" className="relative mr-3 ml-[18px] h-6 w-6">
          <svg viewBox="0 0 24 24" className="size-6"><path d="M0 1h16v12H7l-3 3v-3H0z" fill="#fff" /><path d="M3 4.500h10M3 7h10M3 9.500h7" stroke="#111" /><circle cx="16" cy="16" r="7.500" fill="#333" stroke="#888" /></svg>
          <span className="absolute top-[7px] left-[13px]">1</span>
        </button>
        <span className="mr-1 h-10 border-l border-[#555]" />
      </div>
    </footer>
  )
}

export default function App() {
  return (
    <div className="relative flex h-screen w-full flex-col overflow-hidden bg-[#727272] font-['DejaVu_Sans_Condensed','DejaVu_Sans',sans-serif] text-[11px] leading-4 text-black">
      <TitleBar />
      <InfoHeader />
      <main className="flex min-h-0 flex-1">
        <div className="flex min-w-0 flex-1 flex-col">
          <NodeEditor />
          <div className="flex h-[282px] shrink-0">
            <ImageEditor />
            <View3D />
          </div>
        </div>
        <div className="flex w-[236px] shrink-0 flex-col border-l border-black">
          <Properties />
          <Timeline />
        </div>
      </main>
      <Taskbar />

      {/* tooltip and pointer over the screen selector */}
      <div role="tooltip" className="absolute top-[52px] left-[260px] rounded bg-[#191919] px-[13px] py-[9px] whitespace-nowrap text-white shadow-md shadow-black/60">Choose Screen layout</div>
      <svg viewBox="0 0 12 19" className="pointer-events-none absolute top-[34px] left-[256px] h-[19px] w-3"><path d="M.5.500v15l3.600-3.400 2.500 5.900 2.400-1-2.500-5.800H11z" fill="#fff" stroke="#000" strokeWidth=".8" /></svg>
    </div>
  )
}
